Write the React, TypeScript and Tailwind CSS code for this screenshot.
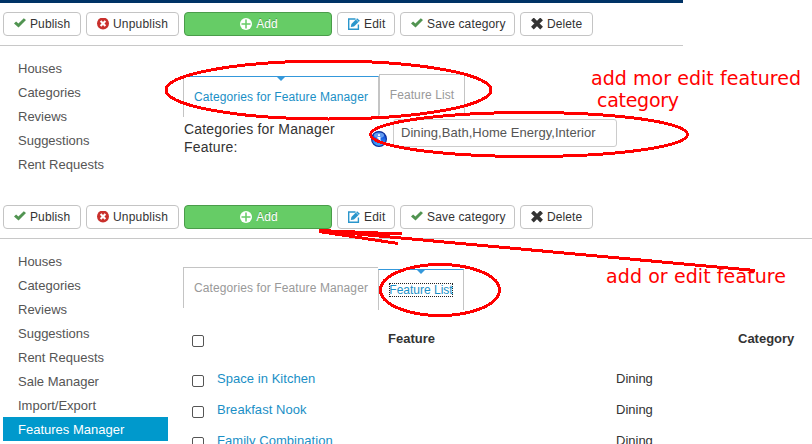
import React from 'react'
import clsx from 'clsx'

const menu = ['Houses', 'Categories', 'Reviews', 'Suggestions', 'Rent Requests', 'Sale Manager', 'Import/Export', 'Features Manager']
const features = ['Space in Kitchen', 'Breakfast Nook', 'Family Combination']

const CheckIcon = () => (
  <svg width="12" height="12" viewBox="0 0 12 12" className="shrink-0">
    <path d="M0 5.4 2.1 3.4 4.4 5.6 9.8 .2 12 2.1 4.5 9.6Z" fill="#519451" />
  </svg>
)

const UnpublishIcon = () => (
  <svg width="12" height="12" viewBox="0 0 12 12" className="shrink-0">
    <circle cx="6" cy="5.5" r="6" fill="#c9302c" />
    <path d="M3.6 3.1 8.4 7.9M8.4 3.1 3.6 7.9" stroke="#fff" strokeWidth="2.1" />
  </svg>
)

const PlusIcon = () => (
  <svg width="12" height="12" viewBox="0 0 12 12" className="shrink-0">
    <circle cx="6" cy="6" r="6" fill="#fff" />
    <path d="M6 1.5V10.5M1.5 6H10.5" stroke="#66cc66" strokeWidth="1.5" />
  </svg>
)

const EditIcon = () => (
  <svg width="12" height="12" viewBox="0 0 12 12" className="shrink-0">
    <path d="M7.5 1H.7V11.2H10.4V6.5" fill="none" stroke="#2a96cc" strokeWidth="1.4" />
    <path d="M2.8 9 3.4 5.9 9.1.2 11.9 2.8 6 8.6Z" fill="#2a96cc" />
    <path d="M8 1.4 10.6 3.9" stroke="#fff" strokeWidth=".6" />
  </svg>
)

const DeleteIcon = () => (
  <svg width="12" height="12" viewBox="0 0 12 12" className="shrink-0">
    <path d="M1.4 .9 10.6 10.1M10.6 .9 1.4 10.1" stroke="#333" strokeWidth="3.8" />
  </svg>
)

const InfoIcon = () => (
  <svg width="16" height="16" viewBox="0 0 16 16">
    <defs>
      <linearGradient id="info" x1="0" y1="0" x2="0" y2="1">
        <stop offset="0" stopColor="#0a3fc0" />
        <stop offset=".4" stopColor="#1559e0" />
        <stop offset="1" stopColor="#4db4ff" />
      </linearGradient>
    </defs>
    <circle cx="8" cy="8" r="7.4" fill="url(#info)" stroke="#0b2f9c" strokeWidth="1.2" />
    <ellipse cx="8" cy="4.2" rx="5" ry="2.6" fill="#8fc4ff" opacity=".65" />
    <path d="M8 3.3V5M6.4 6.8H8.6V12" stroke="#fff" strokeWidth="1.8" fill="none" />
  </svg>
)

function Button({ icon, className, children }: { icon: React.ReactNode, className: string, children: React.ReactNode }) {
  return (
    <button className={clsx('flex h-6 items-center rounded-[4px] border text-xs whitespace-nowrap', className)}>
      {icon}
      <span>{children}</span>
    </button>
  )
}

function Toolbar() {
  const plain = 'border-[#c4c4c4] bg-white pl-[10px] gap-1 text-[#333]'
  return (
    <div className="flex gap-[5px] pl-[3px]">
      <Button icon={<CheckIcon />} className={clsx(plain, 'w-[78px] tracking-[0.12px]')}>Publish</Button>
      <Button icon={<UnpublishIcon />} className={clsx(plain, 'w-[93px] tracking-[0.2px]')}>Unpublish</Button>
      <Button icon={<PlusIcon />} className="w-[148px] justify-center gap-1 border-[#4a9c4a] bg-[#66cc66] pl-[2px] text-white [text-shadow:0_-1px_0_rgba(0,0,0,0.25)]">Add</Button>
      <Button icon={<EditIcon />} className={clsx(plain, 'w-[58px] tracking-[0.2px]')}>Edit</Button>
      <Button icon={<CheckIcon />} className={clsx(plain, 'w-[115px] tracking-[0.15px]')}>Save category</Button>
      <Button icon={<DeleteIcon />} className={clsx(plain, 'w-[73px] tracking-[0.1px]')}>Delete</Button>
    </div>
  )
}

function Sidebar({ items, className }: { items: string[], className: string }) {
  return (
    <ul className={clsx('ml-[3px] w-[165px] shrink-0 text-[13px]', className)}>
      {items.map(item => (
        <li
          key={item}
          className={clsx('h-6 pl-[15px]', item === 'Features Manager' ? 'bg-[#0099cc] text-white' : 'text-[#555]')}
        >
          {item}
        </li>
      ))}
    </ul>
  )
}

function Tab({ active, className, children }: { active?: boolean, className: string, children: React.ReactNode }) {
  return (
    <div
      className={clsx(
        'flex h-[41px] flex-col items-center border-t text-xs whitespace-nowrap',
        active ? 'mt-[2px] border-t-[#3498db] text-[#1a8fc6]' : 'border-t-[#c4c4c4] text-[#999]',
        className
      )}
    >
      <div className="h-[13px]">
        {active && (
          <svg width="8" height="4" viewBox="0 0 8 4">
            <path d="M0 0H8L4 4Z" fill="#3498db" />
          </svg>
        )}
      </div>
      <div className="leading-[15px]">{children}</div>
    </div>
  )
}

const Checkbox = () => <span className="block size-3 rounded-[2px] border border-[#555] bg-white" />

function Annotations() {
  return (
    <svg width="812" height="444" viewBox="0 0 812 444" className="pointer-events-none absolute top-0 left-0">
      <g fill="none" stroke="#ff0000" strokeWidth="3" shapeRendering="crispEdges">
        <ellipse cx="328.5" cy="90" rx="162.5" ry="29" />
        <ellipse cx="529" cy="134.5" rx="158.5" ry="22" />
        <ellipse cx="440" cy="290" rx="59.5" ry="25.5" />
        <path d="M319 230.5 755 270.5M319 230.5 402 234M319 231.5 398 243.5" />
      </g>
      <g fill="#ff0000" fontFamily="DejaVu Sans, sans-serif" fontSize="19">
        <text x="591" y="85" textLength="210">add mor edit featured</text>
        <text x="597" y="107" textLength="82">category</text>
        <text x="606" y="283" textLength="180">add or edit feature</text>
      </g>
    </svg>
  )
}

export default function App() {
  return (
    <div className="relative h-[444px] w-[812px] overflow-hidden bg-white font-['Liberation_Sans',Arial,sans-serif] text-[#333]">
      <section className="h-[205px]">
        <div className="h-[3px] w-[683px] bg-[#003366]" />
        <div className="h-[43px] w-[683px] border-b border-[#c8c8c8] pt-[9px]">
          <Toolbar />
        </div>
        <div className="flex pt-[11px]">
          <Sidebar items={menu.slice(0, 5)} className="leading-6" />
          <div className="ml-[15px] pt-[17px]">
            <div className="flex h-[43px]">
              <Tab active className="w-[196px] border-x border-x-[#c4c4c4] tracking-[0.11px]">Categories for Feature Manager</Tab>
              <Tab className="w-[86px] border-x border-x-[#c4c4c4] tracking-[0.1px]">Feature List</Tab>
            </div>
            <div className="flex pl-px">
              <div className="w-[187px] pt-[3px] text-sm leading-[18px] tracking-[0.17px]">
                Categories for Manager<br />Feature:
              </div>
              <div className="w-[22px] pt-[14px]"><InfoIcon /></div>
              <div className="mt-[2px] h-[28px] w-[224px] rounded-[3px] border border-[#ccc] pl-[7px] text-[13px] leading-[26px] tracking-[0.04px] text-[#555]">
                Dining,Bath,Home Energy,Interior
              </div>
            </div>
          </div>
        </div>
      </section>

      <section>
        <div className="h-[34px] border-b border-[#c8c8c8]">
          <Toolbar />
        </div>
        <div className="flex pt-[10px]">
          <Sidebar items={menu} className="leading-[26px]" />
          <div className="ml-[15px] pt-[18px]">
            <div className="flex h-[68px]">
              <Tab className="w-[195px] border-l border-l-[#c4c4c4] tracking-[0.11px]">Categories for Feature Manager</Tab>
              <Tab active className="w-[86px] border-x border-x-[#c4c4c4]">
                <span className="-outline-offset-1 outline-1 outline-dotted outline-[#222]">Feature List</span>
              </Tab>
            </div>
            <table className="table-fixed text-[13px] leading-5">
              <thead>
                <tr className="h-10 text-left align-top">
                  <th className="w-[34px] pl-[9px]"><Checkbox /></th>
                  <th className="w-[399px] pl-[171px]"><span className="relative -top-[6px]">Feature</span></th>
                  <th className="w-[196px] pl-[122px]"><span className="relative -top-[6px]">Category</span></th>
                </tr>
              </thead>
              <tbody>
                {features.map(name => (
                  <tr key={name} className="h-[31px] align-top">
                    <td className="pl-[9px]"><Checkbox /></td>
                    <td className="tracking-[0.05px] text-[#1a8fc6]"><span className="relative -top-[6px]">{name}</span></td>
                    <td><span className="relative -top-[6px]">Dining</span></td>
                  </tr>
                ))}
              </tbody>
            </table>
          </div>
        </div>
      </section>

      <Annotations />
    </div>
  )
}
